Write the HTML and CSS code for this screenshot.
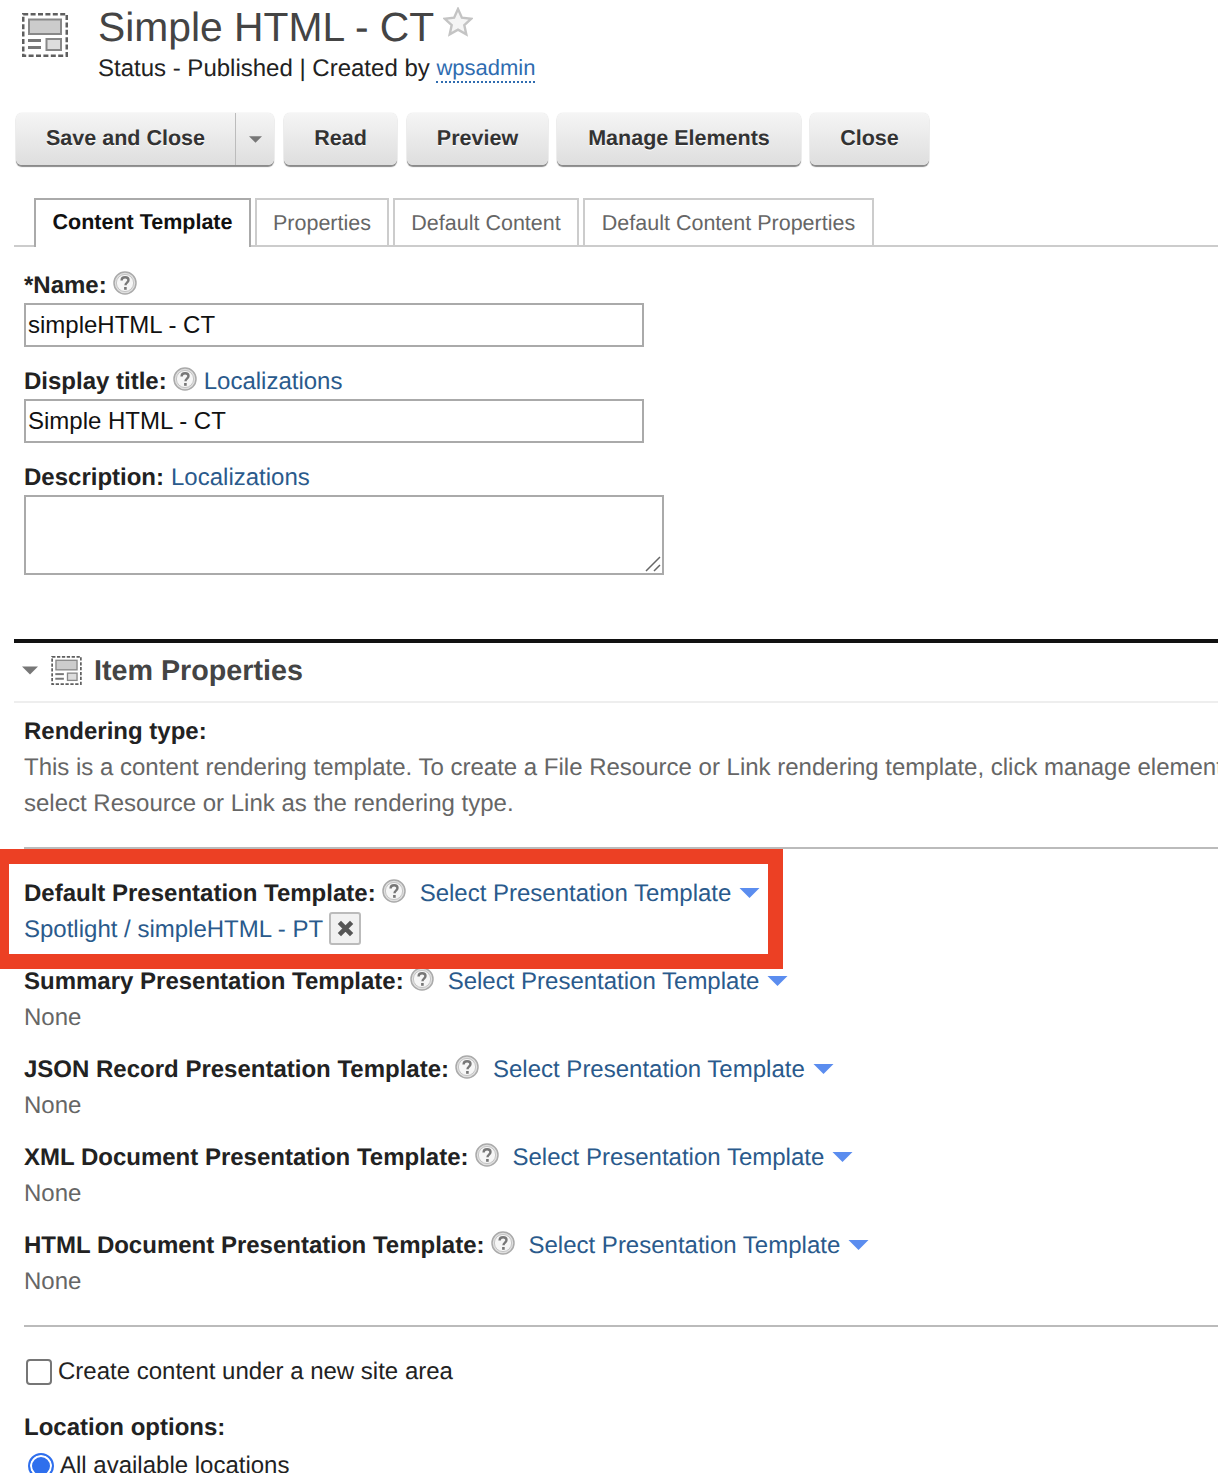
FILE: index.html
```html
<!DOCTYPE html>
<html lang="en">
<head>
<meta charset="utf-8">
<title>Simple HTML - CT</title>
<link rel="stylesheet" href="styles.css">
</head>
<body>
<svg class="defs" width="0" height="0" aria-hidden="true">
  <symbol id="tpl" viewBox="0 0 46 44">
    <rect x="1.2" y="1.2" width="43.6" height="41.6" fill="none" stroke="#5f5f5f" stroke-width="2.6" stroke-dasharray="5 2.4"/>
    <rect x="7" y="6.5" width="32" height="14.5" fill="#ccc" stroke="#888" stroke-width="2"/>
    <rect x="6" y="26" width="13" height="3" fill="#777"/>
    <rect x="6" y="33" width="13" height="3" fill="#777"/>
    <rect x="24.5" y="26" width="14.5" height="11" fill="#ddd" stroke="#888" stroke-width="2"/>
  </symbol>
  <symbol id="help" viewBox="0 0 24 24">
    <circle cx="12" cy="12" r="11" fill="#e0e0e0" stroke="#aaa" stroke-width="1.500"/>
    <circle cx="12" cy="12" r="8.600" fill="#f6f6f6" stroke="#c4c4c4" stroke-width="1"/>
    <path d="M8.600 9.400c0-2 1.500-3.200 3.500-3.200s3.400 1.100 3.400 2.900c0 2.600-3 2.500-3 5.100" fill="none" stroke="#777" stroke-width="2.400"/>
    <rect x="11.100" y="16" width="2.600" height="2.800" fill="#777"/>
  </symbol>
  <symbol id="caret" viewBox="0 0 20 10">
    <path d="M0 0h20L10 10z"/>
  </symbol>
</svg>

<div class="page">
  <header class="head">
    <svg class="head-icon"><use href="#tpl"/></svg>
    <div class="head-text">
      <h1 class="title">Simple HTML - CT
        <svg class="star" viewBox="0 0 30 30"><path d="M15 2l3.900 8.700 9.400 1-7 6.400 2 9.300-8.300-4.800-8.300 4.800 2-9.300-7-6.400 9.400-1z" fill="#f5f5f5" stroke="#c4c4c4" stroke-width="2.400"/></svg>
      </h1>
      <p class="status">Status - Published | Created by <a class="user" href="#">wpsadmin</a></p>
    </div>
  </header>

  <div class="toolbar">
    <div class="btn split">
      <span class="split-main">Save and Close</span>
      <span class="split-arrow"><svg class="caret-sm"><use href="#caret"/></svg></span>
    </div>
    <div class="btn b-read">Read</div>
    <div class="btn b-preview">Preview</div>
    <div class="btn b-manage">Manage Elements</div>
    <div class="btn b-close">Close</div>
  </div>

  <nav class="tabs">
    <span class="tab active">Content Template</span>
    <span class="tab t2">Properties</span>
    <span class="tab t3">Default Content</span>
    <span class="tab t4">Default Content Properties</span>
  </nav>

  <section class="form">
    <div class="label-row lr1"><b>*Name:</b><svg class="help"><use href="#help"/></svg></div>
    <input class="text" type="text" value="simpleHTML - CT">
    <div class="label-row"><b>Display title:</b><svg class="help"><use href="#help"/></svg><a class="link loc" href="#">Localizations</a></div>
    <input class="text" type="text" value="Simple HTML - CT">
    <div class="label-row"><b>Description:</b><a class="link desc-loc" href="#">Localizations</a></div>
    <div class="area-wrap">
      <textarea class="area"></textarea>
      <svg class="grip" viewBox="0 0 16 16"><path d="M1 15L15 1M9 15l6-6" stroke="#666" stroke-width="1.500" fill="none"/></svg>
    </div>
  </section>

  <section class="section">
    <div class="section-head">
      <svg class="caret-head"><use href="#caret"/></svg>
      <svg class="sec-icon"><use href="#tpl"/></svg>
      <h2 class="sec-title">Item Properties</h2>
    </div>
    <div class="body">
      <div class="row"><b>Rendering type:</b></div>
      <div class="row muted nowrap">This is a content rendering template. To create a File Resource or Link rendering template, click manage elements and<br>select Resource or Link as the rendering type.</div>
      <hr class="rule r1">

      <div class="row tmpl"><b>Default Presentation Template:</b><svg class="help"><use href="#help"/></svg><a class="link sel" href="#">Select Presentation Template</a><svg class="caret-blue"><use href="#caret"/></svg></div>
      <div class="row chosen"><a class="link" href="#">Spotlight / simpleHTML - PT</a><span class="x-btn"><svg viewBox="0 0 14 14"><path d="M2.500 2.500l9 9M11.500 2.500l-9 9" stroke="#555" stroke-width="3.400"/></svg></span></div>

      <div class="row tmpl g1"><b>Summary Presentation Template:</b><svg class="help"><use href="#help"/></svg><a class="link sel" href="#">Select Presentation Template</a><svg class="caret-blue"><use href="#caret"/></svg></div>
      <div class="row muted">None</div>
      <div class="row tmpl g2"><b>JSON Record Presentation Template:</b><svg class="help"><use href="#help"/></svg><a class="link sel" href="#">Select Presentation Template</a><svg class="caret-blue"><use href="#caret"/></svg></div>
      <div class="row muted">None</div>
      <div class="row tmpl g2"><b>XML Document Presentation Template:</b><svg class="help"><use href="#help"/></svg><a class="link sel" href="#">Select Presentation Template</a><svg class="caret-blue"><use href="#caret"/></svg></div>
      <div class="row muted">None</div>
      <div class="row tmpl g2"><b>HTML Document Presentation Template:</b><svg class="help"><use href="#help"/></svg><a class="link sel" href="#">Select Presentation Template</a><svg class="caret-blue"><use href="#caret"/></svg></div>
      <div class="row muted">None</div>
      <hr class="rule r2">

      <label class="row check"><input class="cb" type="checkbox">Create content under a new site area</label>
      <div class="row loc-title"><b>Location options:</b></div>
      <label class="row radio"><input class="rb" type="radio" checked>All available locations</label>
    </div>
  </section>
</div>

<div class="callout"></div>
</body>
</html>
```
FILE: styles.css
```css
* { box-sizing: border-box; }
html, body { margin: 0; height: 1473px; overflow: hidden; background: #fff; }
body { font-family: "Liberation Sans", Arial, sans-serif; font-size: 24px; color: #222; line-height: 36px; text-rendering: geometricPrecision; }
.defs { position: absolute; }
.page { padding-left: 14px; width: 1218px; }
a { text-decoration: none; }

.head { display: flex; height: 113px; padding-left: 8px; }
.head-icon { width: 46px; height: 44px; margin-top: 13px; }
.head-text { margin-left: 30px; }
.title { margin: 0; font-size: 40.800px; font-weight: 400; line-height: 54px; color: #444; display: flex; align-items: flex-start; }
.star { width: 30px; height: 30px; margin: 7px 0 0 9px; }
.status { margin: 0; line-height: 28px; color: #222; }
.user { font-size: 22px; color: #2f6cb0; border-bottom: 2px dotted #2f6cb0; padding-bottom: 1px; vertical-align: 1px; }

.toolbar { display: flex; height: 53px; padding-left: 2px; }
.btn { height: 52px; padding-bottom: 3px; border-radius: 6px; background: linear-gradient(#f5f5f5, #dedede); box-shadow: 0 2px 1px #8a8a8a, 0 0 1px #bbb; font-weight: 700; font-size: 21.500px; color: #333; text-shadow: 0 1px 0 #fff; display: flex; align-items: center; justify-content: center; }
.split { width: 258px; padding-bottom: 0; justify-content: flex-start; }
.split-main { width: 220px; height: 52px; line-height: 51px; text-align: center; border-right: 1px solid #bcbcbc; }
.split-arrow { flex: 1; display: flex; justify-content: center; }
.caret-sm { width: 13px; height: 7px; fill: #777; }
.b-read { width: 113px; margin-left: 10px; }
.b-preview { width: 141px; margin-left: 10px; }
.b-manage { width: 244px; margin-left: 9px; }
.b-close { width: 119px; margin-left: 9px; }

.tabs { display: flex; height: 49px; margin-top: 32px; padding-left: 20px; border-bottom: 2px solid #ccc; }
.tab { height: 49px; border: 2px solid #ccc; border-bottom: 0; color: #666; font-size: 21.500px; line-height: 46px; text-align: center; margin-left: 4px; flex: none; }
.active { width: 217px; margin-left: 0; border-color: #aaa; background: #fff; color: #111; font-weight: 700; line-height: 44px; position: relative; }
.t2 { width: 134px; }
.t3 { width: 186px; }
.t4 { width: 291px; }

.form { display: flow-root; padding-left: 10px; height: 392px; }
.label-row { display: flex; align-items: center; height: 36px; padding-top: 2px; margin-top: 16px; }
.lr1 { margin-top: 20px; }
.help { width: 24px; height: 24px; margin-left: 6px; margin-top: -7px; flex: none; }
.text { display: block; width: 620px; height: 44px; margin: 0; border: 2px solid #aaa; padding: 0 2px; font: 24px "Liberation Sans", Arial, sans-serif; color: #111; background: #fff; outline: 0; border-radius: 0; }
.link { color: #2a5a8c; }
.loc { margin-left: 7px; }
.desc-loc { margin-left: 7px; }
.area-wrap { position: relative; width: 640px; height: 80px; }
.area { display: block; width: 640px; height: 80px; margin: 0; border: 2px solid #aaa; resize: none; background: #fff; outline: 0; }
.grip { position: absolute; right: 3px; bottom: 3px; width: 16px; height: 16px; }

.section { border-top: 4px solid #111; }
.section-head { display: flex; align-items: center; height: 60px; border-bottom: 2px solid #eee; padding: 0 0 3px 8px; }
.caret-head { width: 16px; height: 9px; fill: #777; }
.sec-icon { width: 31px; height: 29px; margin-left: 13px; }
.sec-title { margin: 0 0 0 12px; font-size: 28.700px; font-weight: 700; color: #444; }

.body { padding: 11px 0 0 10px; }
.row { display: flex; align-items: center; min-height: 36px; }
.muted { color: #666; display: block; }
.nowrap { white-space: nowrap; overflow: hidden; }
.rule { margin: 0; border: 0; height: 2px; background: #bbb; }
.r1 { margin-top: 25px; margin-bottom: 27px; }
.r2 { margin-top: 25px; margin-bottom: 27px; }
.sel { margin-left: 14px; }
.caret-blue { width: 21px; height: 10px; fill: #5b8def; margin-left: 8px; margin-top: -2px; }
.chosen { height: 36px; }
.x-btn { width: 32px; height: 33px; margin-left: 6px; margin-top: -3px; border: 2px solid #bbb; border-radius: 3px; background: #f1f1f1; display: flex; align-items: center; justify-content: center; }
.x-btn svg { width: 19px; height: 19px; }
.g1 { margin-top: 16px; }
.g2 { margin-top: 16px; }
.check { color: #222; }
.cb { appearance: none; width: 26px; height: 26px; margin: 0 6px 0 2px; border: 2px solid #767676; border-radius: 4px; background: #fff; }
.loc-title { margin-top: 20px; }
.radio { margin-top: 2px; }
.rb { appearance: none; width: 26px; height: 26px; margin: 0 6px 0 4px; border: 2px solid #2f6fed; border-radius: 50%; background: #2f6fed; box-shadow: inset 0 0 0 2px #fff; }

.callout { position: absolute; left: 0; top: 849px; width: 783px; height: 120px; border: 15px solid #ec4024; border-left-width: 9px; }
```
